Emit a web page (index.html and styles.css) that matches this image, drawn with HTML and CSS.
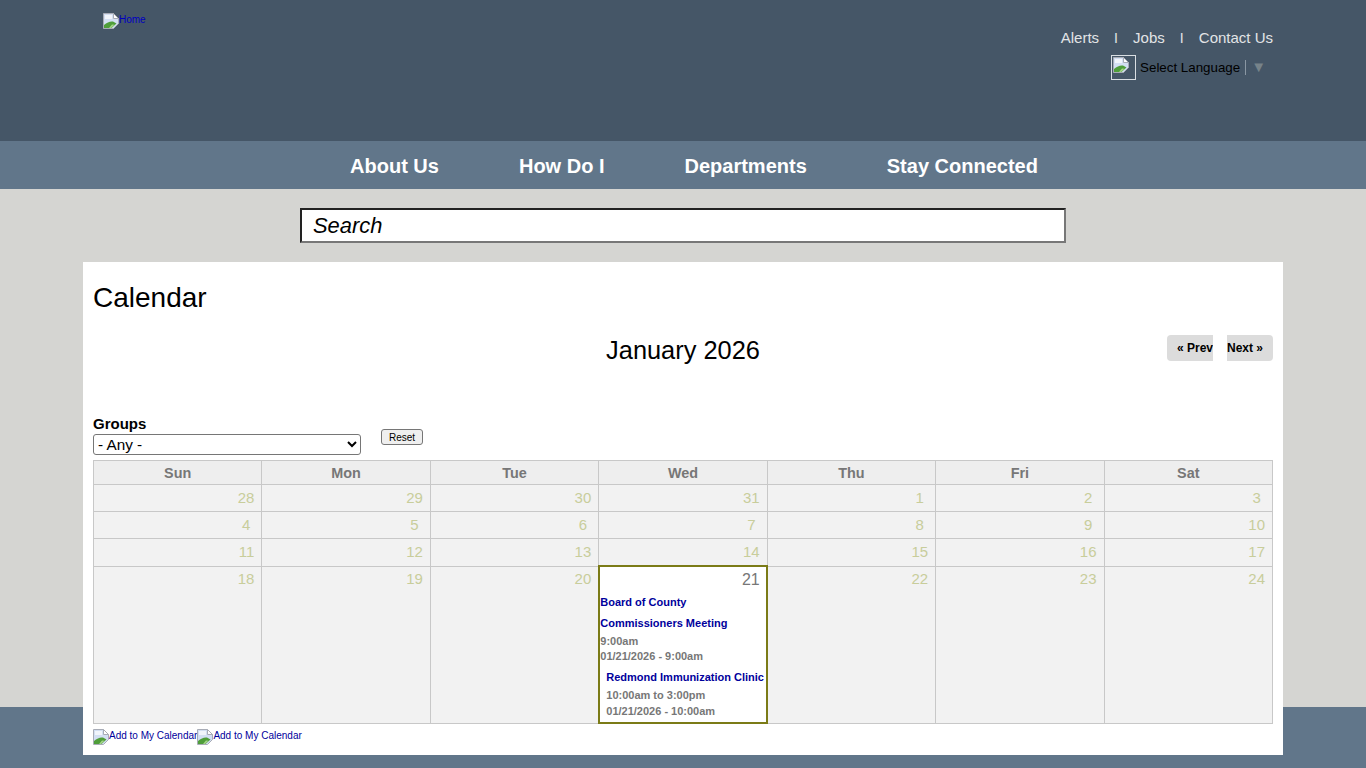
FILE: index.html
```html
<!DOCTYPE html>
<html lang="en">
<head>
<meta charset="utf-8">
<title>Calendar</title>
<link rel="stylesheet" href="styles.css">
</head>
<body>
<svg class="defs" width="0" height="0" aria-hidden="true">
  <symbol id="broken" viewBox="0 0 16 16">
    <path d="M.5.5H10.500L15.500 5.500V10.500L10.500 15.500H.5Z" fill="#d3dff3" stroke="#a8acb6"/>
    <path d="M10.500.5V5.500H15.500Z" fill="#fff" stroke="#a8acb6"/>
    <path d="M2 2H9V6H2Z" fill="#f1f5fb"/>
    <path d="M1 15V12C4 9.500 7 8 10 8.500L13.500 10.500L8.500 15Z" fill="#4f9e3a"/>
    <path d="M6 15L9 11.500L11.500 11.800L8 15Z" fill="#a4d488"/>
  </symbol>
</svg>
<header class="top">
  <a class="logo" href="#"><svg class="broken"><use href="#broken"/></svg><span>Home</span></a>
  <div class="utility">
    <nav class="util-links">
      <a href="#">Alerts</a><span class="sep">I</span><a href="#">Jobs</a><span class="sep">I</span><a href="#">Contact Us</a>
    </nav>
    <div class="lang">
      <span class="lang-icon"><svg class="broken"><use href="#broken"/></svg></span>
      <span class="lang-text">Select Language</span>
      <span class="lang-bar"></span>
      <span class="lang-arrow">▼</span>
    </div>
  </div>
</header>
<nav class="mainnav">
  <a href="#">About Us</a>
  <a href="#">How Do I</a>
  <a href="#">Departments</a>
  <a href="#">Stay Connected</a>
</nav>
<div class="searchband">
  <div class="search">Search</div>
</div>
<main class="card">
  <h1>Calendar</h1>
  <div class="monthbar">
    <h2>January 2026</h2>
    <div class="pager"><a class="prev" href="#">« Prev</a><a class="next" href="#">Next »</a></div>
  </div>
  <div class="filters">
    <div class="group">
      <label for="groups">Groups</label>
      <select id="groups"><option>- Any -</option></select>
    </div>
    <button class="reset" type="button">Reset</button>
  </div>
  <table class="cal">
    <thead>
      <tr><th>Sun</th><th>Mon</th><th>Tue</th><th>Wed</th><th>Thu</th><th>Fri</th><th>Sat</th></tr>
    </thead>
    <tbody>
      <tr class="r1"><td>28</td><td>29</td><td>30</td><td>31</td><td>1&nbsp;</td><td>2&nbsp;</td><td>3&nbsp;</td></tr>
      <tr class="r2"><td>4&nbsp;</td><td>5&nbsp;</td><td>6&nbsp;</td><td>7&nbsp;</td><td>8&nbsp;</td><td>9&nbsp;</td><td>10</td></tr>
      <tr class="r3"><td>11</td><td>12</td><td>13</td><td>14</td><td>15</td><td>16</td><td>17</td></tr>
      <tr class="r4">
        <td>18</td><td>19</td><td>20</td>
        <td class="today">
          <div class="daynum">21</div>
          <div class="event">
            <a href="#">Board of County Commissioners Meeting</a>
            <div class="meta first">9:00am</div>
            <div class="meta">01/21/2026 - 9:00am</div>
          </div>
          <div class="event indented">
            <a href="#">Redmond Immunization Clinic</a>
            <div class="meta first">10:00am to 3:00pm</div>
            <div class="meta">01/21/2026 - 10:00am</div>
          </div>
        </td>
        <td>22</td><td>23</td><td>24</td>
      </tr>
    </tbody>
  </table>
  <div class="addcal">
    <a href="#"><svg class="broken"><use href="#broken"/></svg><span>Add to My Calendar</span></a><a href="#"><svg class="broken"><use href="#broken"/></svg><span>Add to My Calendar</span></a>
  </div>
</main>
<footer class="foot"></footer>
</body>
</html>
```

FILE: styles.css
```css
* { box-sizing: border-box; }
html, body { margin: 0; padding: 0; }
body {
  height: 768px;
  overflow: hidden;
  background: #d5d5d2;
  font-family: "Liberation Sans", Arial, sans-serif;
  color: #000;
}
.defs { display: block; height: 0; }
.broken { width: 16px; height: 16px; flex: none; display: block; }

.top {
  height: 141px;
  background: #455667;
  display: flex;
  justify-content: space-between;
  padding: 13px 93px 0 103px;
}
.logo {
  display: flex;
  align-items: flex-start;
  font-size: 10px;
  line-height: 13px;
  color: #0000c0;
  text-decoration: none;
  height: 16px;
}
.utility { display: flex; flex-direction: column; align-items: flex-end; padding-top: 16px; }
.util-links { display: flex; font-size: 15px; line-height: 18px; height: 18px; }
.util-links a { color: #e2e4e6; text-decoration: none; }
.sep { color: #e2e4e6; margin: 0 14px 0 15px; width: 5px; font-size: 14px; }
.lang { display: flex; align-items: center; margin-top: 8px; height: 25px; padding-right: 7px; }
.lang-icon {
  width: 25px; height: 25px;
  border: 1px solid #d9dee3;
  padding: 1px 0 0 1px;
  margin-right: 4px;
}
.lang-text { font-size: 13.330px; line-height: 16px; color: #000; }
.lang-bar { width: 1px; height: 15px; background: #8a97a3; margin-left: 5px; }
.lang-arrow { font-size: 15px; line-height: 16px; margin-top: -1px; color: #77838a; margin-left: 5px; }

.mainnav {
  height: 48px;
  background: #61768a;
  display: flex;
  justify-content: center;
  gap: 80px;
  padding-left: 22px;
}
.mainnav a {
  color: #fff;
  font-weight: 700;
  font-size: 20px;
  line-height: 50px;
  text-decoration: none;
}

.searchband { height: 73px; padding: 19px 0 0 300px; }
.search {
  width: 766px;
  height: 35px;
  background: #fff;
  border: 2px solid;
  border-color: #222 #777 #777 #222;
  padding-left: 11px;
  font-style: italic;
  font-size: 21.900px;
  line-height: 31px;
}

.card {
  position: relative;
  z-index: 1;
  width: 1200px;
  height: 493px;
  margin-left: 83px;
  background: #fff;
  padding: 0 10px;
}
.card h1 {
  margin: 0;
  padding-top: 19px;
  font-weight: 400;
  font-size: 28px;
  line-height: 34px;
  height: 53px;
}
.monthbar { position: relative; height: 99px; padding-top: 16px; }
.monthbar h2 {
  margin: 0;
  text-align: center;
  font-weight: 400;
  font-size: 25.400px;
  line-height: 38px;
}
.pager { position: absolute; right: 0; top: 20px; display: flex; }
.pager a {
  display: block;
  width: 46px;
  height: 26px;
  background: #dcdcdc;
  font-weight: 700;
  font-size: 12px;
  line-height: 27px;
  color: #000;
  text-decoration: none;
  white-space: nowrap;
}
.pager .prev { border-radius: 4px 0 0 4px; padding-left: 10px; margin-right: 14px; overflow: hidden; }
.pager .next { border-radius: 0 4px 4px 0; padding-left: 0; }

.filters { display: flex; align-items: flex-start; height: 46px; }
.group { width: 288px; }
.group label { display: block; font-weight: 700; font-size: 15px; line-height: 17px; height: 19px; margin-top: 1px; }
.group select {
  display: block;
  width: 268px;
  height: 21px;
  font-family: "Liberation Sans", Arial, sans-serif;
  font-size: 15.300px;
  background: #fff;
  border: 1px solid #767676;
  border-radius: 3px;
  padding: 0;
  color: #000;
}
.reset {
  width: 42px;
  height: 16px;
  margin-top: 15px;
  padding: 0;
  font-family: "Liberation Sans", Arial, sans-serif;
  font-size: 10px;
  line-height: 13px;
  color: #000;
  background: #efefef;
  border: 1px solid #767676;
  border-radius: 3px;
}

.cal {
  width: 1180px;
  border-collapse: collapse;
  table-layout: fixed;
  border: 1px solid #c8c8c8;
}
.cal th, .cal td { border: 1px solid #c8c8c8; }
.cal th {
  height: 24px;
  padding: 1px 0 0;
  background: #eee;
  color: #777;
  font-weight: 700;
  font-size: 14.400px;
  line-height: 18px;
}
.cal td {
  background: #f2f2f2;
  color: #c8cd9b;
  font-size: 15px;
  line-height: 17px;
  text-align: right;
  vertical-align: top;
  padding: 4px 7px 0 0;
}
.r1 td, .r2 td { height: 27px; }
.r3 td { height: 28px; }
.r4 td { height: 157px; padding-top: 3px; }
.cal td.today {
  position: relative;
  background: #fff;
  color: #777;
  padding: 4px 0 0 1px;
  text-align: left;
  font-size: 11px;
}
.cal td.today::after {
  content: "";
  position: absolute;
  left: -1px;
  right: -1px;
  top: -2px;
  bottom: -1px;
  border: 2px solid #7b7b17;
  pointer-events: none;
}
.daynum { text-align: right; font-size: 16px; line-height: 18px; padding-right: 7px; height: 21px; }
.event { font-weight: 700; font-size: 11px; padding-left: 0; }
.event a { color: #00009c; text-decoration: none; line-height: 21px; display: block; }
.meta { color: #777; line-height: 16px; }
.meta.first { height: 14px; line-height: 15px; }
.event.indented { padding-left: 6px; margin-top: 4px; white-space: nowrap; }
.event.indented a { line-height: 18px; }
.event.indented .meta.first { height: 17px; padding-top: 2px; }

.addcal { display: flex; padding-top: 5px; }
.addcal a {
  display: flex;
  color: #00009c;
  font-size: 10px;
  line-height: 14px;
  text-decoration: none;
  height: 16px;
}

.foot {
  height: 61px;
  margin-top: -48px;
  background: #61768a;
}
```
